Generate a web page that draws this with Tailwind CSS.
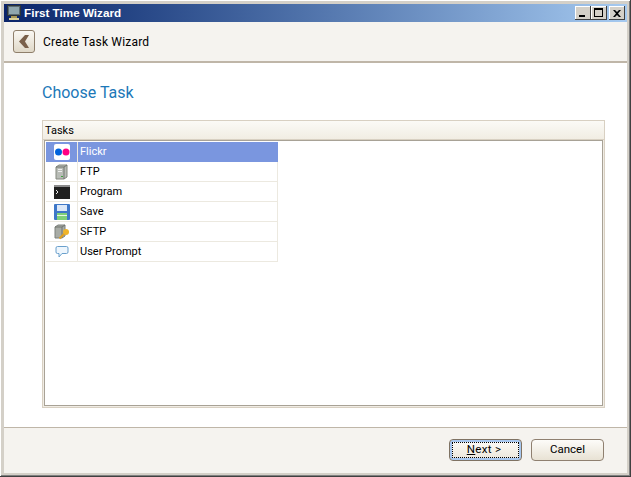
<!DOCTYPE html>
<html lang="en">
<head>
  <meta charset="UTF-8" />
  <title>First Time Wizard</title>
  <script src="https://cdn.jsdelivr.net/npm/@tailwindcss/browser@4"></script>
</head>
<body class="w-[631px] h-[477px] overflow-hidden font-['Roboto',sans-serif] text-[11px] text-black">
  <div class="w-full h-full flex flex-col p-[4px] bg-[#d4d0c8] shadow-[inset_-1px_-1px_0_#404040,inset_1px_1px_0_#ffffff,inset_-2px_-2px_0_#808080]">
    <!-- Title bar -->
    <div class="h-[18px] shrink-0 flex items-center pl-[3px] pr-[2px] bg-gradient-to-r from-[#0a246a] to-[#a6caf0]">
      <svg width="16" height="16" viewBox="0 0 16 16" class="shrink-0">
        <rect x="0.500" y="0.500" width="13" height="10" fill="#5a6a72" stroke="#2c3438"/>
        <rect x="2" y="2" width="10" height="7" fill="#8fa6ae"/>
        <path d="M4 11h6v2H4z" fill="#a89858"/>
        <path d="M2 13h10v2H2z" fill="#d8cf9a"/>
      </svg>
      <span class="ml-[1px] font-['Liberation_Sans',sans-serif] font-bold text-[11.7px] text-white">First Time Wizard</span>
      <div class="ml-auto flex">
        <div class="w-[16px] h-[14px] bg-[#d4d0c8] shadow-[inset_-1px_-1px_0_#404040,inset_1px_1px_0_#ffffff] relative">
          <div class="absolute left-[4px] top-[9px] w-[6px] h-[2px] bg-black"></div>
        </div>
        <div class="w-[16px] h-[14px] bg-[#d4d0c8] shadow-[inset_-1px_-1px_0_#404040,inset_1px_1px_0_#ffffff] relative">
          <div class="absolute left-[3px] top-[2px] w-[9px] h-[9px] border border-black border-t-2"></div>
        </div>
        <div class="ml-[2px] w-[16px] h-[14px] bg-[#d4d0c8] shadow-[inset_-1px_-1px_0_#404040,inset_1px_1px_0_#ffffff] flex items-center justify-center">
          <svg width="8" height="7" viewBox="0 0 8 7"><path d="M0 0h2l2 2 2-2h2L5 3.500 8 7H6L4 5 2 7H0l3-3.500z" fill="#000"/></svg>
        </div>
      </div>
    </div>

    <!-- Header -->
    <div class="h-[41px] shrink-0 flex items-center pl-[9px] bg-[#f5f3ef] border-b-2 border-[#bfb6a8]">
      <button class="w-[22px] h-[23px] flex items-center justify-center rounded-[3px] border border-[#8f7f6b] bg-gradient-to-b from-[#faf8f3] to-[#e0d8c8]">
        <svg width="10" height="13" viewBox="0 0 10 13"><path d="M6 0h4L6 6.500 10 13H6L0 6.500z" fill="#7a604a"/></svg>
      </button>
      <span class="ml-[8px] pt-[1px] text-[12px] tracking-[0.2px]">Create Task Wizard</span>
    </div>

    <!-- Content -->
    <div class="flex-1 min-h-0 bg-white pl-[38px] pr-[22px] pt-[19px] pb-[19px] flex flex-col">
      <h1 class="text-[16px] leading-[22px] text-[#1c78b8]">Choose Task</h1>
      <div class="mt-[16px] flex-1 min-h-0 flex flex-col border border-[#d8d0c2] shadow-[inset_0_0_0_1px_#f0ece4]">
        <div class="h-[19px] shrink-0 flex items-center pl-[2px] pt-[2px] bg-gradient-to-b from-[#fbfaf6] to-[#f1ede3] border-b border-[#d8d0c2]">Tasks</div>
        <div class="flex-1 min-h-0 m-px mt-0 border border-[#a8a296] p-px">
          <div class="w-[232px]">
            <div class="h-[20px] flex bg-[#7a96df] text-white">
              <div class="w-[32px] flex items-center justify-center border-r border-[#ece9e0]">
                <svg width="16" height="16" viewBox="0 0 16 16"><rect width="16" height="16" rx="2" fill="#fff"/><circle cx="4.500" cy="8" r="3.500" fill="#0063dc"/><circle cx="12" cy="8" r="3.500" fill="#ff0084"/></svg>
              </div>
              <div class="pl-[2px] leading-[19px]">Flickr</div>
            </div>
            <div class="h-[20px] flex border-b border-[#ece9e0] border-r">
              <div class="w-[32px] flex items-center justify-center border-r border-[#ece9e0]">
                <svg width="14" height="16" viewBox="0 0 14 16"><path d="M1 3l3-2h8v12l-3 2H1z" fill="#b8bcb6" stroke="#84887f"/><path d="M9 15V3l3-2M1 3h8" fill="none" stroke="#70746e"/><rect x="3" y="5" width="4" height="1" fill="#eeeeee"/><rect x="3" y="7" width="4" height="1" fill="#eeeeee"/><rect x="6" y="12" width="2" height="1" fill="#40a040"/></svg>
              </div>
              <div class="pl-[2px] leading-[20px]">FTP</div>
            </div>
            <div class="h-[20px] flex border-b border-[#ece9e0] border-r">
              <div class="w-[32px] flex items-center justify-center border-r border-[#ece9e0]">
                <svg width="16" height="14" viewBox="0 0 16 14"><rect width="16" height="14" fill="#202020"/><rect width="16" height="2" fill="#8c8c8c"/><path d="M2 5l2 2-2 2" fill="none" stroke="#e8e8e8"/></svg>
              </div>
              <div class="pl-[2px] leading-[20px]">Program</div>
            </div>
            <div class="h-[20px] flex border-b border-[#ece9e0] border-r">
              <div class="w-[32px] flex items-center justify-center border-r border-[#ece9e0]">
                <svg width="16" height="16" viewBox="0 0 16 16"><rect width="16" height="16" rx="1" fill="#3f78c8"/><rect x="3" y="1" width="10" height="6" fill="#dce8f8"/><rect x="3" y="9" width="10" height="7" fill="#7fd07a"/><rect x="3" y="11" width="10" height="1" fill="#e8f8e0"/></svg>
              </div>
              <div class="pl-[2px] leading-[20px]">Save</div>
            </div>
            <div class="h-[20px] flex border-b border-[#ece9e0] border-r">
              <div class="w-[32px] flex items-center justify-center border-r border-[#ece9e0]">
                <svg width="16" height="16" viewBox="0 0 16 16"><path d="M1 3l3-2h7v11l-3 2H1z" fill="#a8aca6" stroke="#7c807c"/><path d="M8 14V3l3-2M1 3h7" fill="none" stroke="#70746e"/><circle cx="12" cy="8" r="3" fill="#f0b428"/><path d="M10 10 5.500 14.500" stroke="#e0a020" stroke-width="2.200"/></svg>
              </div>
              <div class="pl-[2px] leading-[20px]">SFTP</div>
            </div>
            <div class="h-[20px] flex border-b border-[#ece9e0] border-r">
              <div class="w-[32px] flex items-center justify-center border-r border-[#ece9e0]">
                <svg width="14" height="14" viewBox="0 0 14 14"><path d="M2.500 1.500h9a1.500 1.500 0 0 1 1.500 1.500v4a1.500 1.500 0 0 1-1.500 1.500H7L4 12V8.500H2.500A1.500 1.500 0 0 1 1 7V3a1.500 1.500 0 0 1 1.500-1.500z" fill="#eef6fd" stroke="#6aa0cc"/></svg>
              </div>
              <div class="pl-[2px] leading-[20px]">User Prompt</div>
            </div>
          </div>
        </div>
      </div>
    </div>

    <!-- Footer -->
    <div class="h-[46px] shrink-0 flex items-center justify-end gap-[9px] pr-[23px] pb-[2px] bg-[#f5f3ef] border-t border-[#bfb6a8] text-[11.500px]">
      <button class="relative w-[73px] h-[22px] rounded-[4px] border border-[#7f7263] bg-gradient-to-b from-[#fdfcf9] to-[#ebe6da] shadow-[inset_0_0_0_2px_#a8c8f0]">
        <span class="absolute inset-[2px] border border-dotted border-black"></span>
        <span class="relative pr-[3px] tracking-[0.3px]"><span class="underline">N</span>ext &gt;</span>
      </button>
      <button class="w-[73px] h-[22px] rounded-[4px] border border-[#8f8070] bg-gradient-to-b from-[#fdfcf9] to-[#e8e2d4]">Cancel</button>
    </div>
  </div>
</body>
</html>
